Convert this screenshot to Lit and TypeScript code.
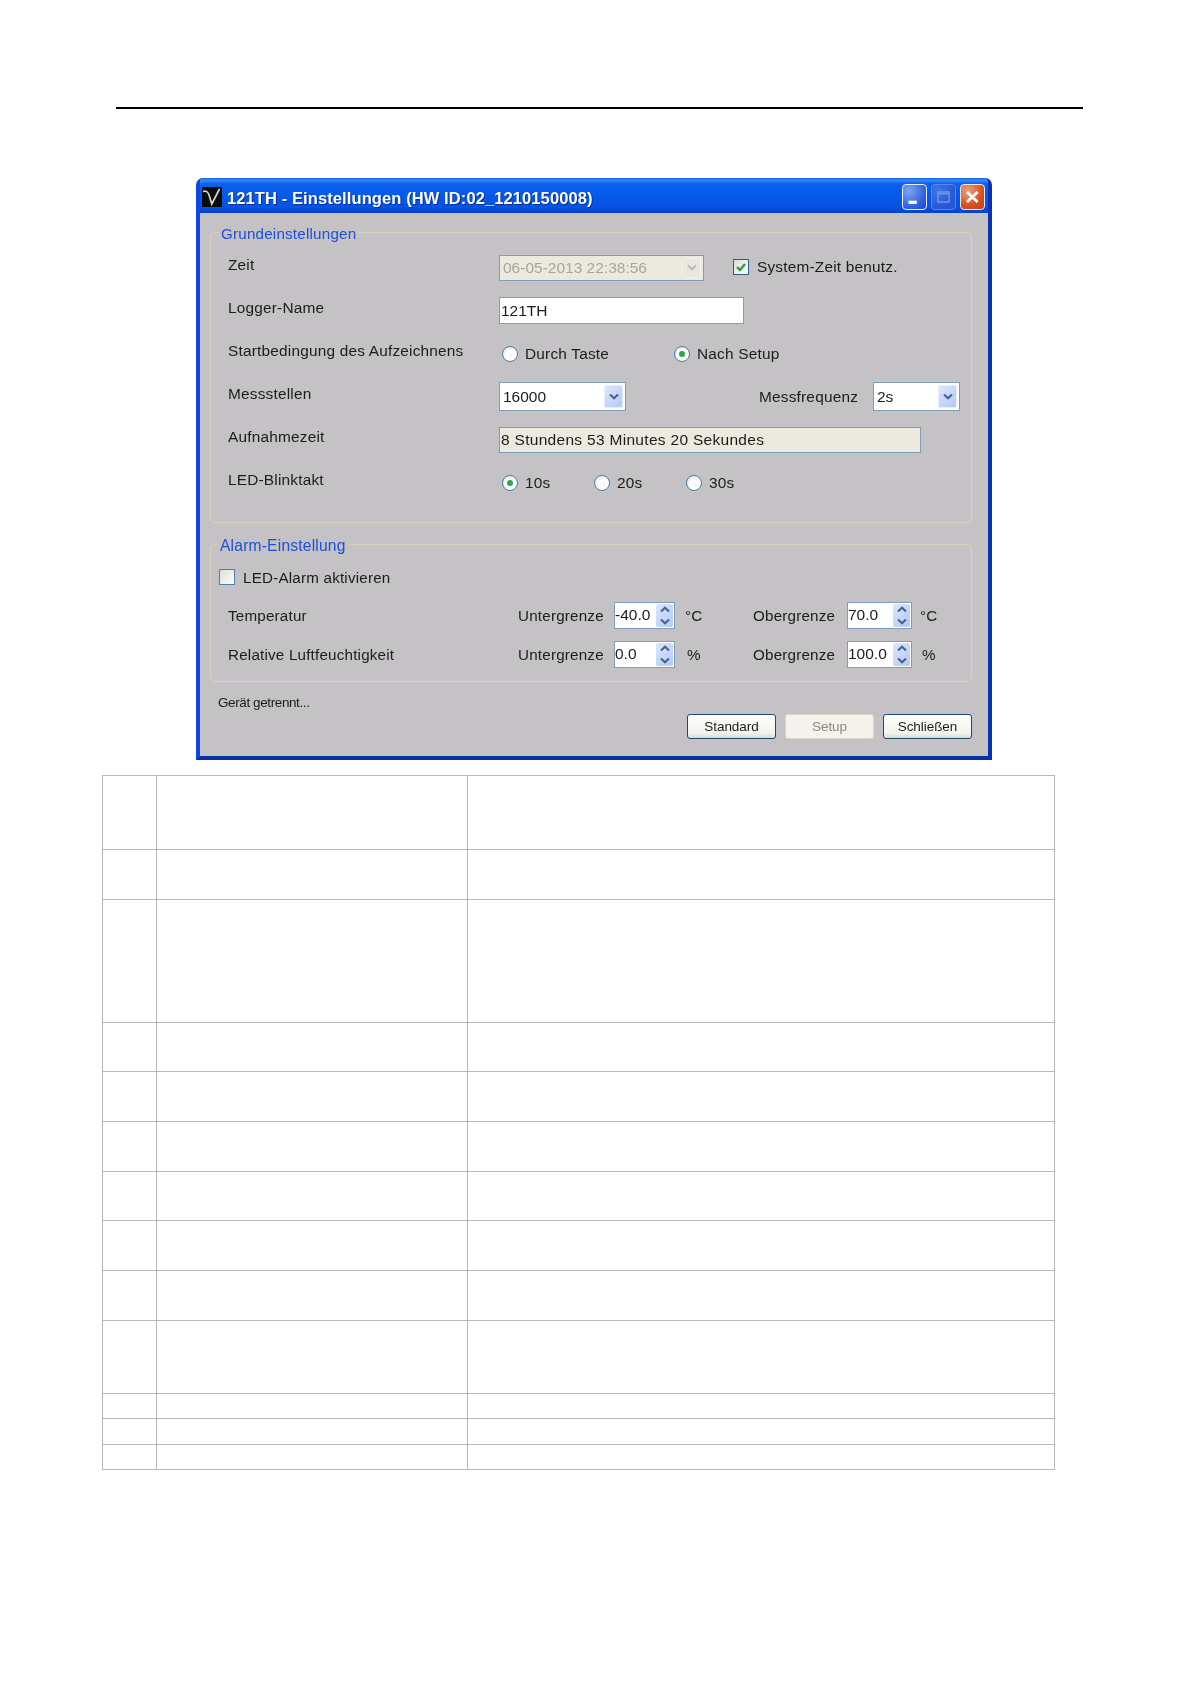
import { LitElement, html, css, svg } from "lit";
import { customElement } from "lit/decorators.js";

const chevron = (up = false) => html`<svg class="chev" viewBox="0 0 10 7" aria-hidden="true">
  ${svg`<path d=${up ? "M1 5.500 5 1.800l4 3.700" : "M1 1.500 5 5.200l4-3.700"} fill="none" stroke="#4a6290" stroke-width="2.200"/>`}
</svg>`;

const combo = (value: string, cls: string, disabled = false) => html`
  <div class="combo ${cls} ${disabled ? "off" : ""}">
    <span class="cval">${value}</span>
    <span class="cbtn">${chevron()}</span>
  </div>`;

const radio = (text: string, on: boolean, cls: string) => html`
  <div class="radio ${cls}"><span class="dot ${on ? "on" : ""}"></span><span>${text}</span></div>`;

const spin = (value: string, cls = "") => html`
  <div class="spin ${cls}">
    <span class="sval">${value}</span>
    <span class="sbtns"><span class="sbtn">${chevron(true)}</span><span class="sbtn">${chevron()}</span></span>
  </div>`;

const ROWS = [74, 50, 123, 49, 50, 50, 49, 50, 50, 73, 25, 26, 25];

@customElement("app-root")
export class AppRoot extends LitElement {
  static styles = css`
    :host { display: block; height: 1685px; background: #fff; overflow: hidden; }
    * { box-sizing: border-box; }
    .page { display: flex; flex-direction: column; align-items: flex-start; padding-top: 107px; }
    .rule { width: 967px; height: 2px; margin-left: 116px; background: #000; }

    .win {
      width: 796px; height: 582px; margin: 69px 0 0 196px;
      display: flex; flex-direction: column;
      border-radius: 7px 7px 0 0; overflow: hidden;
      font: 15.4px "Liberation Sans", Arial, sans-serif; letter-spacing: .2px; color: #1c1c1c;
      background: #c5c2c5;
      border-style: solid; border-color: #0a3ad6 #0831b4 #0831a8 #0c47e6; border-width: 0 4px 4px 4px;
      filter: blur(.45px);
    }
    .title {
      flex: 0 0 35px; margin: 0 -4px; padding: 3px 7px 0 6px;
      display: flex; align-items: center;
      background: linear-gradient(#0a5be6 0, #3d8cf6 6%, #0a62ee 16%, #0558e8 55%, #0552e4 85%, #0340c0 100%);
    }
    .logo { width: 20px; height: 20px; margin-right: 5px; flex: none; }
    .ttext { font-weight: 700; font-size: 16.5px; letter-spacing: .1px; line-height: 20px; padding-top: 2px; color: #fff; flex: 1; text-shadow: 1px 1px 0 #0a2f9a; white-space: nowrap; }
    .wbtns { display: flex; gap: 4px; }
    .wb { width: 25px; height: 26px; border-radius: 4px; border: 1px solid #e8eefc;
      background: radial-gradient(circle at 25% 25%, #7ea6f4, #2a5ce0 70%, #1f49c8); display: flex; }
    .wb svg { width: 100%; height: 100%; }
    .wb.max { border-color: #5f86e4; background: radial-gradient(circle at 25% 25%, #3f74e8, #2657d4 70%); }
    .wb.close { background: radial-gradient(circle at 30% 25%, #f0a080, #d8501f 60%, #c23a12); }

    .body { flex: 1; padding: 8px 16px 0 10px; display: flex; flex-direction: column; }
    fieldset { margin: 0; min-width: 0; border: 1px solid #d6d3b8; border-radius: 5px; }
    legend { padding: 4px 3px 0; margin-left: -10px; line-height: 18px; font-size: 15.2px; letter-spacing: .2px; color: #1d50d8; }
    .g1 { padding: 3px 5px 18px 17px; }
    .g2 { padding: 3px 5px 7px 17px; margin-top: 10px; font-size: 15.2px; }
    .g2 legend { margin-left: -11px; font-size: 15.6px; }

    .row { height: 43px; display: flex; align-items: center; white-space: nowrap; }
    .row > * { flex-shrink: 0; }
    .lab { flex: 0 0 271px; margin-bottom: 6px; }
    .sysbox { display: flex; align-items: center; gap: 8px; margin-left: 29px; padding-bottom: 1px; }
    .check { width: 16px; height: 16px; flex: none; border: 1px solid #2a5c8c; display: flex;
      background: linear-gradient(135deg, #dcdcd6, #fff); }
    .check.blank { border-color: #4e7fae; }
    .check svg { width: 100%; height: 100%; }

    .combo { display: flex; align-items: stretch; background: #fff; border: 1px solid #7f9db9; padding: 2px; font-size: 15.5px; }
    .combo.wide { width: 205px; height: 26px; }
    .combo.num { width: 127px; height: 29px; }
    .combo.freq { width: 87px; height: 29px; }
    .combo.off { background: #ece9df; color: #a8a59c; }
    .cval { flex: 1; padding-left: 1px; display: flex; align-items: center; letter-spacing: 0; }
    .cbtn { flex: 0 0 19px; display: flex; align-items: center; justify-content: center; border-radius: 2px;
      background: linear-gradient(135deg, #dce7fd, #b4c9f8); border: 1px solid #e4ecfd; }
    .off .cbtn { background: #e9e7e0; border-color: #f2f0ea; }
    .off .chev path { stroke: #bcb9b0; }
    .chev { width: 10px; height: 7px; display: block; }

    .field { height: 27px; display: flex; align-items: center; border: 1px solid #7f9db9; padding-left: 1px; letter-spacing: 0; font-size: 15.5px; }
    .field.name { width: 245px; background: #fff; }
    .field.time { width: 422px; height: 26px; background: #ece9df; letter-spacing: .3px; }

    .radio { display: flex; align-items: center; gap: 7px; }
    .dot { width: 16px; height: 16px; flex: none; border-radius: 50%; border: 1.5px solid #4f7ea8;
      background: radial-gradient(circle at 60% 60%, #f4f4f2, #fff 40%, #d8d8d4); display: flex; align-items: center; justify-content: center; }
    .dot.on::after { content: ""; width: 6px; height: 6px; border-radius: 50%; background: #2fa84a; }
    .r-a { width: 172px; margin-left: 3px; }
    .r-b { width: 92px; }
    .r-first { margin-left: 3px; }
    .mf { width: 114px; margin-left: 133px; }

    .grow { display: grid; grid-template-columns: 290px 96px 71px 68px 94px 73px auto; align-items: center; white-space: nowrap; height: 39px; }
    .arow { height: 38px; display: flex; align-items: center; gap: 8px; margin-left: -9px; white-space: nowrap; }
    .spin { width: 61px; height: 27px; display: flex; background: #fff; border: 1px solid #7f9db9; padding: 1px 1px 1px 0; font-size: 15.5px; letter-spacing: 0; }
    .spin.b { width: 65px; }
    .sval { flex: 1; padding-left: 0; margin-top: -1px; display: flex; align-items: center; }
    .sbtns { flex: 0 0 17px; display: flex; flex-direction: column; border-radius: 2px; background: linear-gradient(135deg, #dce7fd, #b4c9f8); }
    .sbtn { flex: 1; display: flex; align-items: center; justify-content: center; }
    .pct { padding-left: 2px; }

    .foot { display: flex; justify-content: space-between; align-items: flex-start; padding-left: 8px; }
    .status { margin-top: 12px; font-size: 13.5px; letter-spacing: -.4px; line-height: 18px; }
    .btns { display: flex; gap: 9px; margin-top: 32px; }
    .btn { width: 89px; height: 25px; display: flex; align-items: center; justify-content: center; font-size: 13.5px; letter-spacing: -.05px;
      border: 1px solid #1c4a72; border-radius: 3px; background: linear-gradient(#fff, #f3f2ec 80%, #dcd8cc); }
    .btn.dis { border-color: #dad7c8; background: #f4f3ee; color: #8a8880; }

    table { width: 953px; margin: 15px 0 0 102px; border-collapse: collapse; table-layout: fixed; }
    td { border: 1px solid #b8b8b8; padding: 0; }
    .c1 { width: 54px; }
    .c2 { width: 311px; }
  `;

  render() {
    return html`<div class="page">
      <div class="rule"></div>
      <div class="win">
        <div class="title">
          <svg class="logo" viewBox="0 0 20 20" aria-hidden="true">
            <rect width="20" height="20" fill="#0b0b0c"/>
            <path d="M1 4.500c3-1 5 0 6.200 4l2.600 8.500L17.500 2" fill="none" stroke="#d4d4d4" stroke-width="1.700"/>
          </svg>
          <span class="ttext">121TH - Einstellungen (HW ID:02_1210150008)</span>
          <div class="wbtns">
            <div class="wb"><svg viewBox="0 0 25 26"><rect x="6" y="17" width="9" height="3.500" fill="#fff"/></svg></div>
            <div class="wb max"><svg viewBox="0 0 25 26"><path d="M6.500 7.500h12v11h-12zM6.500 9.500h12" fill="none" stroke="#6f95ea" stroke-width="1.500"/></svg></div>
            <div class="wb close"><svg viewBox="0 0 25 26"><path d="M6.500 7.500l11.500 11M18 7.500l-11.500 11" stroke="#fff" stroke-width="3"/></svg></div>
          </div>
        </div>
        <div class="body">
          <fieldset class="g1">
            <legend>Grundeinstellungen</legend>
            <div class="row">
              <span class="lab">Zeit</span>
              ${combo("06-05-2013 22:38:56", "wide", true)}
              <div class="sysbox">
                <span class="check"><svg viewBox="0 0 14 14"><path d="M3 7l3 3 5-6" fill="none" stroke="#22a63c" stroke-width="2.400"/></svg></span>
                <span>System-Zeit benutz.</span>
              </div>
            </div>
            <div class="row"><span class="lab">Logger-Name</span><div class="field name">121TH</div></div>
            <div class="row">
              <span class="lab">Startbedingung des Aufzeichnens</span>
              ${radio("Durch Taste", false, "r-a")}
              ${radio("Nach Setup", true, "")}
            </div>
            <div class="row">
              <span class="lab">Messstellen</span>
              ${combo("16000", "num")}
              <span class="mf">Messfrequenz</span>
              ${combo("2s", "freq")}
            </div>
            <div class="row"><span class="lab">Aufnahmezeit</span><div class="field time">8 Stundens 53 Minutes 20 Sekundes</div></div>
            <div class="row">
              <span class="lab">LED-Blinktakt</span>
              ${radio("10s", true, "r-b r-first")}
              ${radio("20s", false, "r-b")}
              ${radio("30s", false, "r-b")}
            </div>
          </fieldset>
          <fieldset class="g2">
            <legend>Alarm-Einstellung</legend>
            <div class="arow"><span class="check blank"></span><span>LED-Alarm aktivieren</span></div>
            <div class="grow">
              <span>Temperatur</span><span>Untergrenze</span>${spin("-40.0")}<span>°C</span>
              <span>Obergrenze</span>${spin("70.0", "b")}<span>°C</span>
            </div>
            <div class="grow">
              <span>Relative Luftfeuchtigkeit</span><span>Untergrenze</span>${spin("0.0")}<span class="pct">%</span>
              <span>Obergrenze</span>${spin("100.0", "b")}<span class="pct">%</span>
            </div>
          </fieldset>
          <div class="foot">
            <span class="status">Gerät getrennt...</span>
            <div class="btns">
              <div class="btn">Standard</div>
              <div class="btn dis">Setup</div>
              <div class="btn">Schließen</div>
            </div>
          </div>
        </div>
      </div>
      <table>
        <colgroup><col class="c1" /><col class="c2" /><col /></colgroup>
        ${ROWS.map((h) => html`<tr style="height:${h}px"><td></td><td></td><td></td></tr>`)}
      </table>
    </div>`;
  }
}
